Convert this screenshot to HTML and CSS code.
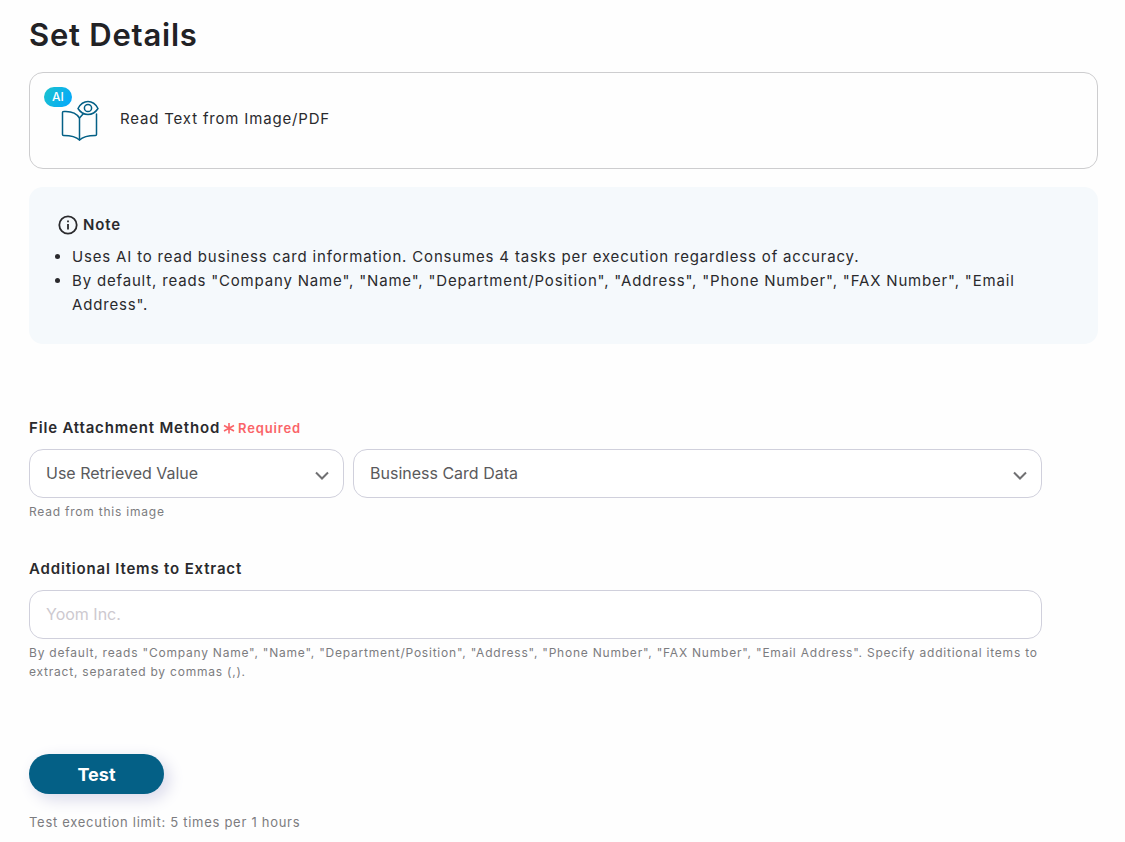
FILE: index.html
```html
<!DOCTYPE html>
<html lang="en">
<head>
<meta charset="utf-8">
<meta name="viewport" content="width=device-width, initial-scale=1">
<title>Set Details</title>
<link rel="stylesheet" href="styles.css">
</head>
<body>
<main class="page">
  <h1 class="title">Set Details</h1>
  <section class="action-card">
    <div class="action-icon">
      <svg class="book" viewBox="0 0 40 42" width="40" height="42" fill="none" stroke="#046086" stroke-width="1.5" stroke-linejoin="round" stroke-linecap="round" aria-hidden="true">
        <path d="M19.500 18C16.500 13 10 11 3.500 11.500Q2.500 11.500 2.500 12.500V34.500Q2.500 35.500 3.500 35.500C10 35.500 16 36.500 19.500 40C23 36.500 29 35.500 35.500 35.500Q36.500 35.500 36.500 34.500V14"/>
        <path d="M19.500 18V40M19.500 18L23.500 13.500"/>
        <path d="M18 8.500C23 -0.700 33 -0.700 38 8.500C33 16.500 23 16.500 18 8.500Z"/>
        <circle cx="28" cy="8" r="3.600"/>
      </svg>
      <span class="badge">AI</span>
    </div>
    <p class="action-name">Read Text from Image/PDF</p>
  </section>
  <section class="note">
    <h2 class="note-title">
      <svg viewBox="0 0 20 20" width="20" height="20" fill="none" stroke="currentColor" stroke-width="1.800" aria-hidden="true"><circle cx="10" cy="10" r="8.700"/><path d="M10 9V14.500M10 5.500V7.300"/></svg>
      Note
    </h2>
    <ul class="note-list">
      <li>Uses AI to read business card information. Consumes 4 tasks per execution regardless of accuracy.</li>
      <li>By default, reads "Company Name", "Name", "Department/Position", "Address", "Phone Number", "FAX Number", "Email Address".</li>
    </ul>
  </section>
  <form class="form">
    <div class="field">
      <div class="label-row">
        <label class="label" for="method">File Attachment Method</label>
        <span class="required"><svg viewBox="0 0 12 12" width="12" height="12" stroke="currentColor" stroke-width="1.600" aria-hidden="true"><path d="M6 1V11.500M1 3.500L11 9M11 3.500L1 9"/></svg>Required</span>
      </div>
      <div class="selects">
        <div class="select-wrap method">
          <select class="control" id="method"><option>Use Retrieved Value</option></select>
          <svg class="chevron" viewBox="0 0 14 10" width="14" height="10" aria-hidden="true"><path d="M1 1.500L7 7.500L13 1.500"/></svg>
        </div>
        <div class="select-wrap source">
          <select class="control" aria-label="Retrieved value"><option>Business Card Data</option></select>
          <svg class="chevron" viewBox="0 0 14 10" width="14" height="10" aria-hidden="true"><path d="M1 1.500L7 7.500L13 1.500"/></svg>
        </div>
      </div>
      <p class="help">Read from this image</p>
    </div>
    <div class="field">
      <div class="label-row"><label class="label" for="items">Additional Items to Extract</label></div>
      <input class="control" id="items" type="text" placeholder="Yoom Inc.">
      <p class="help">By default, reads "Company Name", "Name", "Department/Position", "Address", "Phone Number", "FAX Number", "Email Address". Specify additional items to extract, separated by commas (,).</p>
    </div>
    <button class="test" type="button">Test</button>
    <p class="limit">Test execution limit: 5 times per 1 hours</p>
  </form>
</main>
</body>
</html>
```
FILE: styles.css
```css
* { box-sizing: border-box; }
body { margin: 0; background: #fefefe; color: #2a2a2d; font-family: Inter, sans-serif; font-size: 15px; letter-spacing: 0.055em; }
h1, h2, p, ul { margin: 0; }
.page { padding: 14px 27px 10px 29px; }
.title { color: #222225; font-size: 31px; line-height: 42px; font-weight: 600; letter-spacing: 0.025em; }
.action-card { display: flex; align-items: center; gap: 20px; margin-top: 16px; height: 97px; padding: 0 30px; border: 1px solid #cdcdcf; border-radius: 14px; }
.action-icon { position: relative; display: flex; }
.badge { position: absolute; top: -13px; left: -16px; width: 28px; height: 20px; border-radius: 10px; background: linear-gradient(120deg, #1cc3cc, #02a6ff); color: #fff; font-size: 12px; font-weight: 500; letter-spacing: 0; line-height: 20px; text-align: center; }
.action-name { padding-bottom: 3px; line-height: 24px; }
.note { margin-top: 18px; padding: 26px 28px 27px 29px; border-radius: 14px; background: #f5f9fc; }
.note-title { display: flex; align-items: center; gap: 5px; font-size: 15px; line-height: 24px; font-weight: 600; }
.note-list { margin-top: 8px; padding: 0 0 0 14px; line-height: 24px; }
.form { margin-top: 72px; padding-right: 56px; }
.field { margin-bottom: 36px; }
.label-row { display: flex; align-items: center; gap: 3px; margin-bottom: 9px; line-height: 24px; }
.label { font-weight: 600; }
.required { display: flex; align-items: center; gap: 3px; color: #fa6468; font-size: 13px; font-weight: 600; }
.selects { display: flex; gap: 9px; }
.select-wrap { position: relative; }
.method { flex: 315; }
.source { flex: 689; }
.control { display: block; width: 100%; height: 49px; padding: 0 16px 2px; border: 1px solid #d0d0dc; border-radius: 14px; background: #fff; color: #5a5a5c; font: inherit; font-size: 16px; letter-spacing: 0; appearance: none; }
.control::placeholder { color: #cdc9cf; opacity: 1; }
.chevron { position: absolute; right: 15px; top: 22px; fill: none; stroke: #707072; stroke-width: 2; pointer-events: none; }
.help, .limit { color: #7c7c7f; font-size: 12px; line-height: 19px; letter-spacing: 0.065em; }
.help { margin-top: 4px; }
.test { display: block; width: 135px; height: 40px; margin-top: 73px; border: 0; border-radius: 20px; background: #046086; color: #fff; font: 700 18px/40px Inter, sans-serif; box-shadow: 5px 5px 16px #d8d8ea; }
.limit { margin-top: 19px; font-size: 13px; letter-spacing: 0.055em; }
```
